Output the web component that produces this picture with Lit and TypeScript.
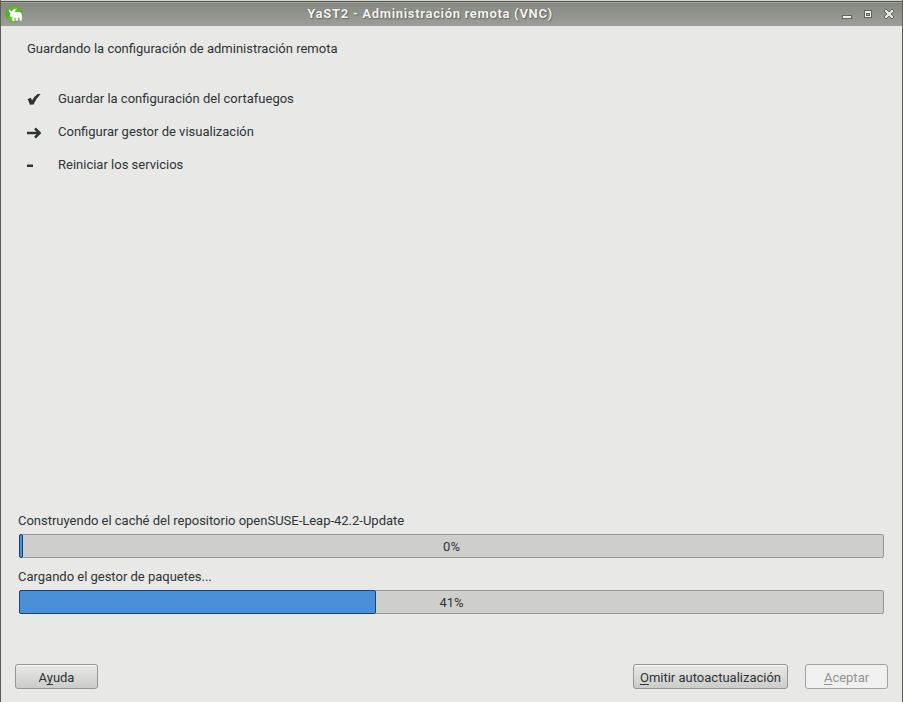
import { LitElement, html, css, svg } from "lit";
import { customElement, property } from "lit/decorators.js";

@customElement("progress-meter")
class ProgressMeter extends LitElement {
  @property() label = "";
  @property({ type: Number }) value = 0;
  @property({ type: Number }) fill = 0;

  static styles = css`
    :host { display: block; }
    .label { height: 18px; line-height: 18px; white-space: nowrap; letter-spacing: -0.01px; }
    .bar {
      margin: 4px 1px 0; height: 24px; box-sizing: border-box; position: relative;
      border: 1px solid #999a98; border-radius: 2px; background: #cececc;
      display: flex; align-items: center; justify-content: center;
    }
    .fill {
      position: absolute; left: -1px; top: -1px; height: 24px; box-sizing: border-box;
      background: #4a90d9; border: 1px solid #184472; border-radius: 2px;
    }
    .value { position: relative; line-height: 22px; padding-top: 1px; }
  `;

  render() {
    return html`
      <div class="label">${this.label}</div>
      <div class="bar">
        <div class="fill" style="width:${this.fill}px"></div>
        <span class="value">${this.value}%</span>
      </div>`;
  }
}

@customElement("app-root")
class AppRoot extends LitElement {
  static styles = css`
    :host {
      display: flex; flex-direction: column; box-sizing: border-box;
      width: 903px; height: 702px; overflow: hidden;
      background: #e8e8e6; color: #2e3436;
      border-left: 1px solid #5c5d59; border-right: 1px solid #5c5d59;
      font: 13px/18px Roboto, "Noto Sans", sans-serif;
    }
    .title {
      flex: none; height: 26px; box-sizing: border-box; display: flex; align-items: center;
      border-top: 1px solid #d3d4cd; padding: 0 6px 0 4px;
      background: linear-gradient(#54554f 0 1px, #a1a39b 1px 2px, #868981 2px, #9c9e97 100%);
    }
    .logo { display: block; margin-top: 1px; }
    .name {
      flex: 1; text-align: center; font-weight: 700; color: #f4f4f2; letter-spacing: 0.67px;
      text-shadow: 0 0 1px #55574f, 1px 1px 1px #6b6d65; padding-right: 3px; line-height: 24px;
    }
    .controls { display: block; margin-bottom: 2px; }
    .content { flex: 1; display: flex; flex-direction: column; padding: 14px 17px 0; }
    .heading { padding-left: 9px; }
    .steps { display: grid; grid-template-columns: 31px auto; row-gap: 15px; padding-left: 9px; margin-top: 32px; }
    .mark { display: block; }
    .meters { margin-top: auto; display: flex; flex-direction: column; gap: 10px; padding-bottom: 50px; }
    .buttons { flex: none; display: flex; padding: 0 14px 13px; height: 25px; }
    .btn {
      box-sizing: border-box; width: 83px; height: 25px; padding: 2px 0 0; margin: 0;
      border: 1px solid #949592; border-radius: 3px; color: #2e3436;
      background: linear-gradient(#e9e9e7, #cbcbc9); box-shadow: inset 0 1px #fafafa;
      font: inherit; text-align: center; line-height: 21px; white-space: nowrap;
    }
    .wide { width: 155px; margin-left: auto; margin-right: 17px; }
    .off { color: #929492; background: #f0f0f0; border-color: #a1a29f; box-shadow: none; }
    .key { text-decoration: underline; text-decoration-skip-ink: none; text-underline-offset: 2px; text-decoration-thickness: 1px; }
  `;

  private steps = [
    { text: "Guardar la configuración del cortafuegos", mark: svg`<path d="M0.5 9.2 L3.8 7.8 L5.1 10.3 Q7.6 6 10.6 4 L13.6 4 Q9.2 8.5 6.5 14.4 L2.8 14.8 Q2.2 11.6 0.5 9.2Z"/>` },
    { text: "Configurar gestor de visualización", mark: svg`<path d="M0 10H12.4M8 5.4L12.6 10L8 14.6" fill="none" stroke="#2e3436" stroke-width="2.5"/>` },
    { text: "Reiniciar los servicios", mark: svg`<path d="M0 8.5h6v2.5H0z"/>` },
  ];

  render() {
    return html`
      <div class="title">
        <svg class="logo" width="18" height="18" viewBox="0 0 18 18">
          <defs><linearGradient id="g" x2="0" y2="1"><stop stop-color="#68b83b"/><stop offset=".55" stop-color="#49b51c"/><stop offset="1" stop-color="#73ce3a"/></linearGradient></defs>
          <circle cx="9" cy="9" r="8.2" fill="url(#g)" stroke="#5d9a40" stroke-width=".7"/>
          <path d="M4 3.8Q4.6 5.6 6.3 6.4Q7.5 4 11.8 3.4Q10.6 5 9.6 6.8Q14 6.2 16.2 7.8Q17.4 9.2 17 15.8H14.6L14.2 13L13.2 12.6L12.8 16H10.8L10.4 12.8H9.5V16H7.3L7.1 11.5L6.2 12.4L5 11.6L5 8.2Q3.4 6.6 4 3.8Z" fill="#fff" stroke="#7fae69" stroke-width=".3"/>
        </svg>
        <div class="name">YaST2 - Administración remota (VNC)</div>
        <svg class="controls" width="56" height="16" viewBox="0 0 56 16" shape-rendering="crispEdges">
          <path d="M2 10h10v4H2z" fill="#60625c"/><path d="M3 11h8v2H3z" fill="#eeeeec"/>
          <path d="M24 5h8v8h-8z" fill="#60625c"/><path d="M25 6h6v6h-6z" fill="#eeeeec"/>
          <path d="M26 8h4v3h-4z" fill="#60625c"/><path d="M27 9h2v1h-2z" fill="#b0b2ac"/>
          <path d="M45 4h2v1h1v1h2v-1h1v-1h2v1h1v2h-1v1h-1v2h1v1h1v2h-1v1h-2v-1h-1v-1h-2v1h-1v1h-2v-1h-1v-2h1v-1h1v-2h-1v-1h-1v-2h1z" fill="#666862"/>
          <path d="M45 5h2v1h1v1h2v-1h1v-1h2v2h-1v1h-1v2h1v1h1v2h-2v-1h-1v-1h-2v1h-1v1h-2v-2h1v-1h1v-2h-1v-1h-1z" fill="#e6e6e3"/>
        </svg>
      </div>
      <div class="content">
        <div class="heading">Guardando la configuración de administración remota</div>
        <div class="steps">
          ${this.steps.map((s) => html`
            <svg class="mark" width="16" height="18" viewBox="0 0 16 18" fill="#2e3436">${s.mark}</svg>
            <span>${s.text}</span>`)}
        </div>
        <div class="meters">
          <progress-meter label="Construyendo el caché del repositorio openSUSE-Leap-42.2-Update" .value=${0} .fill=${4}></progress-meter>
          <progress-meter label="Cargando el gestor de paquetes..." .value=${41} .fill=${357}></progress-meter>
        </div>
      </div>
      <div class="buttons">
        <button class="btn">A<span class="key">y</span>uda</button>
        <button class="btn wide"><span class="key">O</span>mitir autoactualización</button>
        <button class="btn off" disabled><span class="key">A</span>ceptar</button>
      </div>`;
  }
}
